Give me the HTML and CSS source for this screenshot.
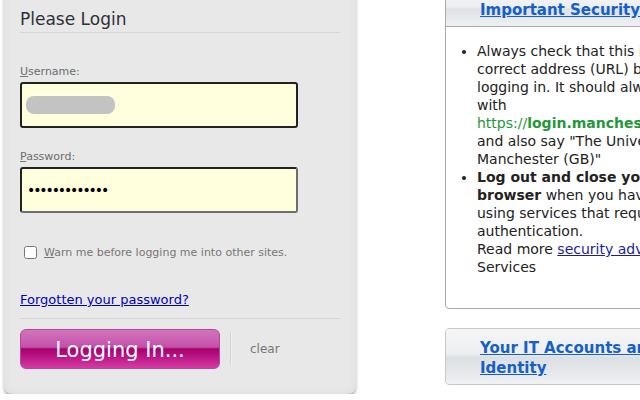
FILE: index.html
```html
<!DOCTYPE html>
<html lang="en">
<head>
<meta charset="utf-8">
<title>Please Login</title>
<link rel="stylesheet" href="styles.css">
</head>
<body>
<div class="page">
  <form class="login">
    <h2 class="login-title">Please Login</h2>

    <label class="label label-first" for="username"><u>U</u>sername:</label>
    <div class="field">
      <input class="text-input" id="username" type="text" value="">
      <span class="redact"></span>
    </div>

    <label class="label" for="password"><u>P</u>assword:</label>
    <div class="field">
      <input class="text-input pw" id="password" type="password" value="abcdefghijklm">
    </div>

    <div class="warn-row">
      <input class="check" id="warn" type="checkbox">
      <label class="warn-label" for="warn"><u>W</u>arn me before logging me into other sites.</label>
    </div>

    <div class="forgot"><a href="#">Forgotten your password?</a></div>

    <div class="actions">
      <button class="btn-login" type="button">Logging In...</button>
      <span class="sep"></span>
      <span class="clear">clear</span>
    </div>
  </form>

  <div class="info">
    <div class="box">
      <div class="box-head"><a href="#">Important Security Information</a></div>
      <ul class="tips">
        <li>Always check that this is the<br>correct address (URL) before<br>logging in. It should always start<br>with<br><span class="url">https://<b>login.manchester.ac.uk</b></span><br>and also say "The University of<br>Manchester (GB)"</li>
        <li><b>Log out and close your<br>browser</b> when you have finished<br>using services that require<br>authentication.<br>Read more <a href="#">security advice</a> from IT<br>Services</li>
      </ul>
    </div>
    <div class="box box-plain">
      <div class="box-head box-head-only"><a href="#">Your IT Accounts and Identity</a></div>
    </div>
  </div>
</div>
</body>
</html>
```

FILE: styles.css
```css
html, body {
  margin: 0;
  padding: 0;
  overflow: hidden;
  background: #fff;
  font-family: "DejaVu Sans", Verdana, sans-serif;
}

.page {
  display: flex;
  align-items: flex-start;
}

/* ---------- login panel ---------- */
.login {
  flex: none;
  width: 352px;
  box-sizing: border-box;
  margin: -20px 0 0 4px;
  padding: 29px 16px 25px;
  background: #e8e8e8;
  border-radius: 0 0 8px 8px;
  box-shadow: 0 3px 4px -1px rgba(0, 0, 0, 0.45), inset 0 0 10px rgba(0, 0, 0, 0.05);
}

.login-title {
  margin: 0;
  padding-bottom: 3px;
  border-bottom: 1px solid #d6d6d6;
  font-size: 17px;
  line-height: 20px;
  font-weight: normal;
  color: #2e3038;
}

.label {
  display: block;
  margin-top: 22px;
  font-size: 11px;
  line-height: 14px;
  color: #6c6c6c;
}

.label-first {
  margin-top: 32px;
}

.label u {
  text-decoration-color: #777;
}

.field {
  position: relative;
  width: 278px;
  height: 46px;
  margin-top: 3px;
}

.text-input {
  display: block;
  width: 100%;
  height: 100%;
  box-sizing: border-box;
  margin: 0;
  padding: 0 5px;
  border: 2px solid #222;
  border-radius: 3px;
  background: #ffffdd;
  font-family: "DejaVu Sans", Verdana, sans-serif;
  font-size: 13px;
  color: #000;
  outline: none;
}

.pw {
  font-size: 14px;
  letter-spacing: -2.1px;
  border-right-color: #6e6e6e;
  border-bottom-color: #6e6e6e;
}

.redact {
  position: absolute;
  left: 6px;
  top: 14px;
  width: 89px;
  height: 18px;
  border-radius: 8px;
  background: #c3c3c3;
  filter: blur(0.6px);
}

.warn-row {
  display: flex;
  align-items: center;
  margin-top: 30px;
}

.check {
  width: 13px;
  height: 13px;
  margin: 3px 7px 3px 4px;
}

.warn-label {
  font-size: 11px;
  line-height: 14px;
  color: #777;
}

.forgot {
  margin-top: 30px;
  padding-bottom: 10px;
  border-bottom: 1px solid #d6d6d6;
  font-size: 13px;
  line-height: 16px;
}

.forgot a {
  color: #0000b8;
}

.actions {
  display: flex;
  align-items: center;
  margin-top: 10px;
}

.btn-login {
  width: 200px;
  height: 40px;
  margin: 0;
  padding: 2px 0 0;
  border: 1px solid #b8489a;
  border-radius: 6px;
  background: linear-gradient(#d274bb 0%, #c85db0 30%, #c24fa7 45%, #b23790 47%, #a5006d 50%, #b5107f 65%, #d63aa5 100%);
  color: #fff;
  font-family: "DejaVu Sans", Verdana, sans-serif;
  font-size: 21px;
  line-height: 24px;
}

.sep {
  width: 1px;
  height: 34px;
  margin-left: 10px;
  background: #d4d4d4;
  box-shadow: 1px 0 0 #f2f2f2;
}

.clear {
  margin-left: 19px;
  font-size: 12px;
  color: #777;
}

/* ---------- info column ---------- */
.info {
  flex: none;
  width: 300px;
  margin: -10px 0 0 89px;
}

.box {
  border: 1px solid #aaa;
  border-radius: 4px;
  background: #fff;
}

.box-head {
  padding: 9px 40px 6px 34px;
  border-bottom: 1px solid #aaa;
  background: linear-gradient(#f5f6f7 0%, #eceef0 45%, #dfe2e5 52%, #eef0f2 100%);
  font-size: 15px;
  line-height: 20px;
  font-weight: bold;
  white-space: nowrap;
}

.box-head a {
  color: #1560c8;
}

.tips {
  margin: 15px 0 32px;
  padding-left: 31px;
  font-size: 14px;
  line-height: 18px;
  color: #222;
  white-space: nowrap;
}

.tips a {
  color: #1c1c9c;
}

.url {
  color: #23963a;
}

.box-plain {
  margin-top: 19px;
  border-color: #c8c8c8;
}

.box-head-only {
  border-bottom: none;
  border-radius: 4px;
  white-space: normal;
  background: linear-gradient(#f5f6f7 0%, #eceef0 45%, #dcdfe3 52%, #eef0f2 100%);
}
```
